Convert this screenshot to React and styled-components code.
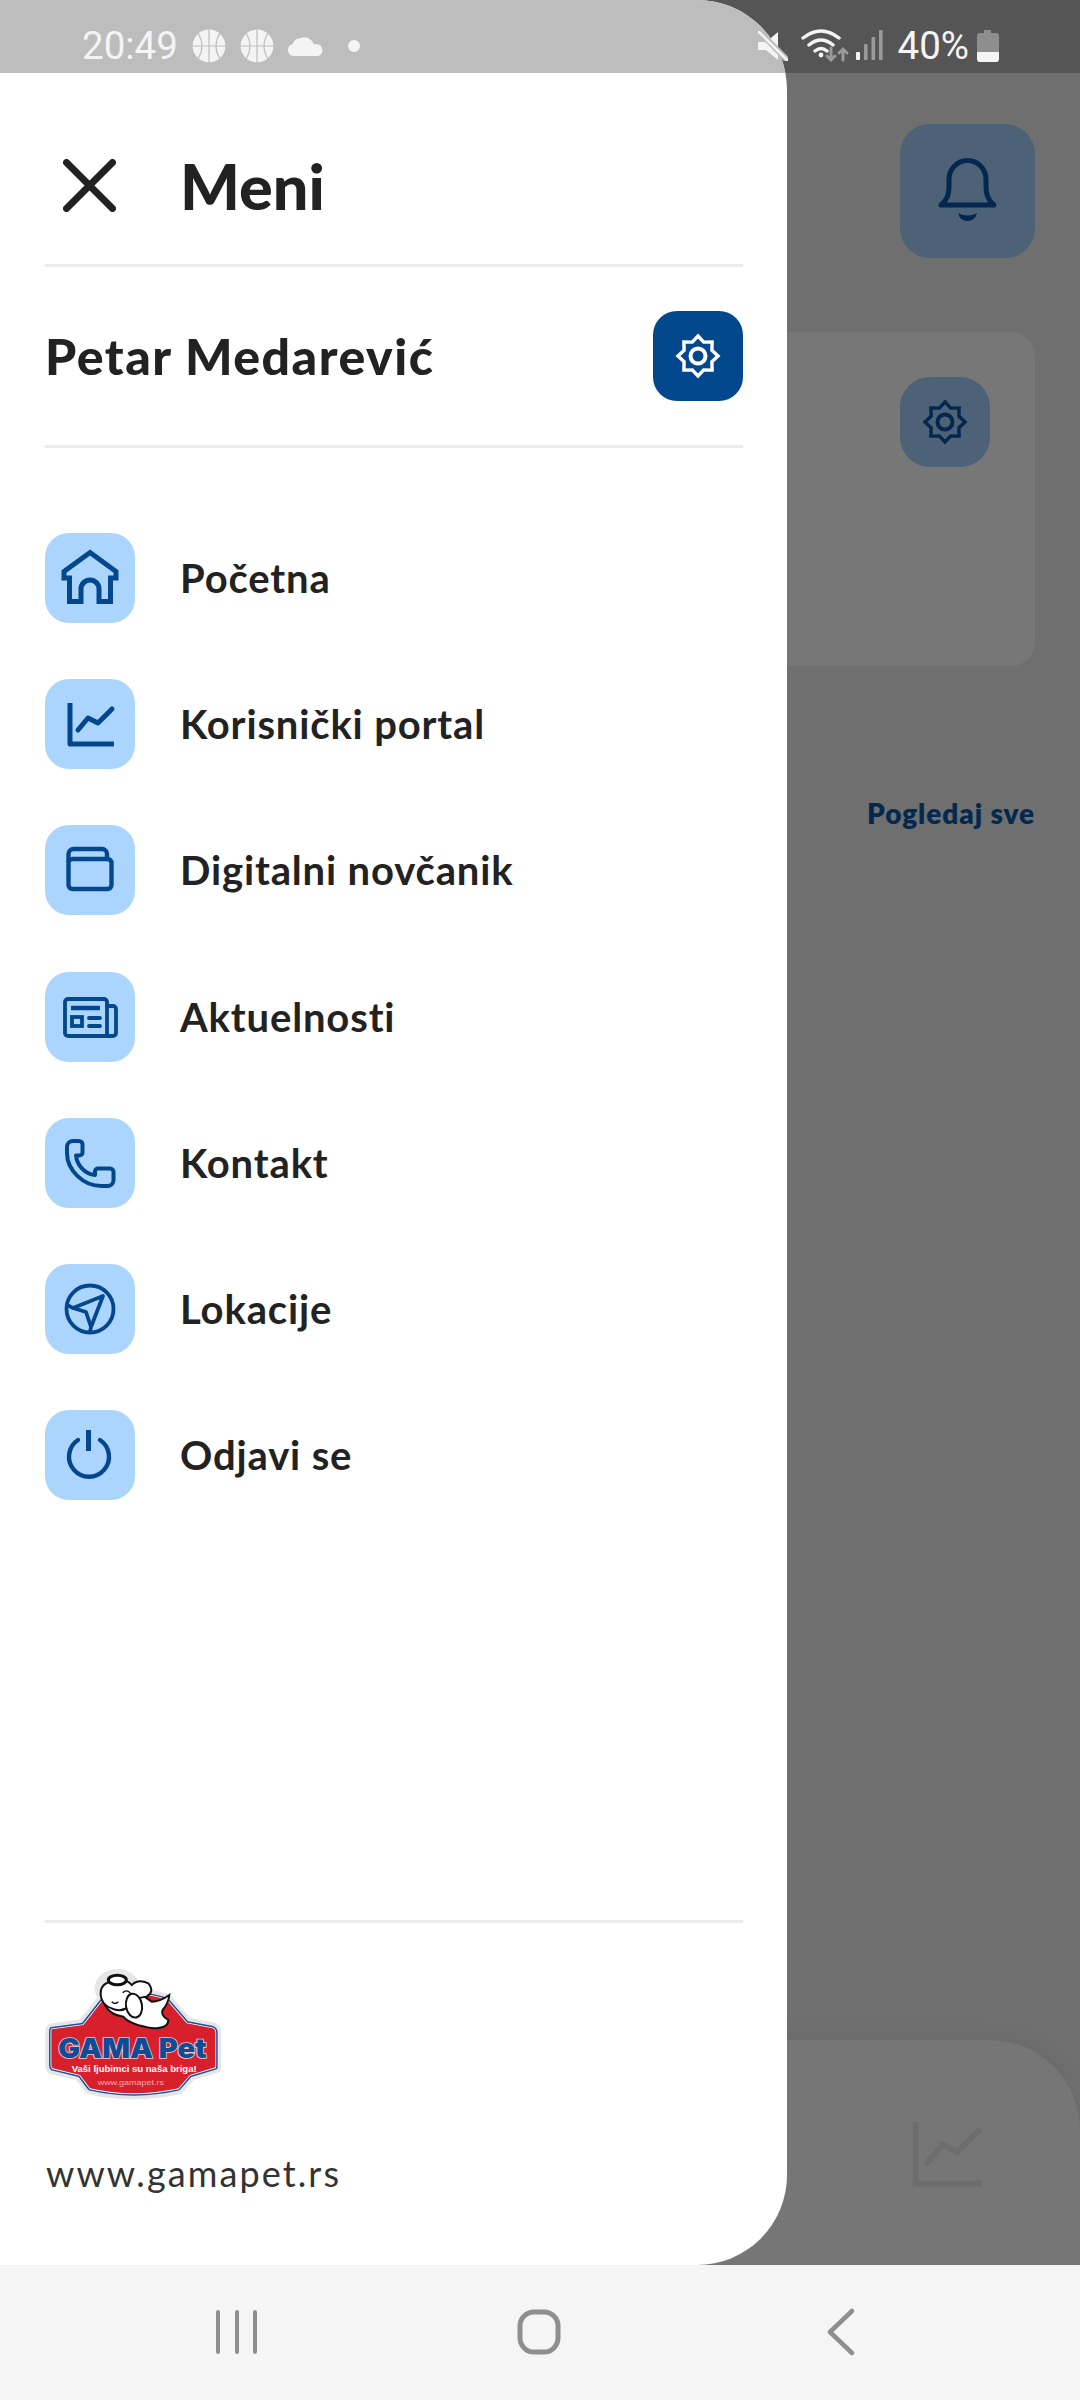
import React from 'react'
import styled, { createGlobalStyle } from 'styled-components'

const blue = '#03488c'

const GlobalStyle = createGlobalStyle`
html, body {
  margin: 0;
  padding: 0;
  background: #6f6f6f;
}
* { box-sizing: border-box; }
`

const Screen = styled.div`
position: relative;
width: 1080px;
height: 2400px;
display: flex;
flex-direction: column;
overflow: hidden;
font-family: Lato, "Noto Sans", sans-serif;
`

/* dimmed page behind the drawer */
const Backdrop = styled.div`
flex: 1;
display: flex;
flex-direction: column;
background: #6f6f6f;
`
const BackStatus = styled.div`
height: 73px;
background: #555555;
`
const BellRow = styled.div`
display: flex;
justify-content: flex-end;
padding: 51px 45px 0 0;
`
const DimButton = styled.div`
width: ${p => p.$w}px;
height: ${p => p.$h}px;
border-radius: 30px;
background: #4d6277;
display: flex;
align-items: center;
justify-content: center;
`
const BackCard = styled.div`
height: 334px;
margin: 74px 45px 0 0;
padding: 45px 45px 0 0;
display: flex;
justify-content: flex-end;
align-items: flex-start;
background: #777777;
border-radius: 24px;
`
const SeeAll = styled.div`
margin: 130px 45px 0 0;
text-align: right;
font-size: 28px;
line-height: 34px;
font-weight: 800;
letter-spacing: 0.9px;
color: #03294f;
`
const BackPanel = styled.div`
margin-top: auto;
height: 225px;
background: #767676;
border-top-right-radius: 90px;
box-shadow: 0 -6px 20px rgba(0, 0, 0, 0.04);
display: flex;
justify-content: flex-end;
padding: 46px 67px 0 0;
`

/* drawer */
const Drawer = styled.aside`
position: absolute;
left: 0;
top: 0;
bottom: 135px;
width: 787px;
display: flex;
flex-direction: column;
background: #ffffff;
border-radius: 0 90px 90px 0;
overflow: hidden;
`
const DrawerStatus = styled.div`
height: 73px;
flex: none;
background: #bdbdbd;
`
const DrawerHead = styled.div`
height: 191px;
flex: none;
display: flex;
align-items: center;
padding: 34px 0 0 63px;
gap: 64px;
`
const Title = styled.h1`
margin: 0;
font-size: 63px;
line-height: 76px;
font-weight: 900;
color: #222222;
`
const Divider = styled.div`
height: 3px;
flex: none;
margin: 0 44px 0 45px;
background: #ececec;
`
const UserRow = styled.div`
height: 178px;
flex: none;
display: flex;
align-items: center;
justify-content: space-between;
padding: 0 44px 0 45px;
`
const UserName = styled.div`
font-size: 50px;
line-height: 60px;
font-weight: 900;
letter-spacing: 1.5px;
color: #222222;
`
const IconBox = styled.div`
width: 90px;
height: 90px;
flex: none;
border-radius: 24px;
background: ${p => p.$dark ? blue : '#acd5fd'};
display: flex;
align-items: center;
justify-content: center;
`
const MenuList = styled.nav`
display: flex;
flex-direction: column;
gap: 56.2px;
padding: 85px 0 0 45px;
`
const MenuRow = styled.div`
display: flex;
align-items: center;
gap: 45px;
`
const MenuLabel = styled.span`
font-size: 40px;
line-height: 48px;
font-weight: 700;
letter-spacing: 0.85px;
color: #222222;
`
const DrawerFoot = styled.div`
margin-top: auto;
display: flex;
flex-direction: column;
`
const LogoWrap = styled.div`
padding: 37px 0 0 40px;
height: 228px;
`
const Website = styled.div`
padding: 0 0 70px 46px;
font-size: 36px;
line-height: 44px;
font-weight: 400;
letter-spacing: 2.1px;
color: #333333;
`

/* android bars */
const StatusBar = styled.div`
position: absolute;
left: 0;
top: 0;
width: 100%;
height: 73px;
display: flex;
align-items: center;
justify-content: space-between;
padding: 18px 81px 0 82px;
font-family: Roboto, sans-serif;
font-size: 38.5px;
color: #f4f4f4;
`
const StatusGroup = styled.div`
display: flex;
align-items: center;
gap: ${p => p.$gap || 0}px;
`
const StatusText = styled.span`
line-height: 55px;
margin: ${p => p.$m || 0};
`
const NavBar = styled.div`
height: 135px;
flex: none;
background: #f5f5f5;
display: flex;
align-items: center;
padding: 0 0 2px 216px;
`
const NavSlot = styled.div`
display: flex;
margin-right: ${p => p.$mr}px;
`

const star = (cx, cy, r1, r2) => {
  const pts = []
  for (let i = 0; i < 16; i++) {
    const r = i % 2 ? r2 : r1
    const a = (Math.PI / 8) * i - Math.PI / 2
    pts.push(`${(cx + r * Math.cos(a)).toFixed(1)},${(cy + r * Math.sin(a)).toFixed(1)}`)
  }
  return pts.join(' ')
}

const Stroke = ({ children, size = 90, box = 90, color = blue, sw = 4.5 }) => (
  <svg width={size} height={size} viewBox={`0 0 ${box} ${box}`} fill="none" stroke={color} strokeWidth={sw} strokeLinecap="round" strokeLinejoin="round">
    {children}
  </svg>
)

const Gear = ({ color }) => (
  <Stroke color={color} sw={3.4}>
    <polygon points={star(45, 45, 20, 15)} strokeLinejoin="miter" />
    <circle cx="45" cy="45" r="7.5" strokeWidth="4" />
  </Stroke>
)
const Chart = ({ color = blue, sw = 5, size = 90 }) => (
  <Stroke color={color} sw={sw} size={size}>
    <path d="M25 24V65H69" strokeLinecap="butt" />
    <path d="M33 51L43 39L53 44L67 30" />
  </Stroke>
)

const icons = {
  home: (
    <Stroke sw={5}>
      <path d="M45 19.5L71 38.5V45H65.5V68.5H54V56a9 9 0 0 0 -18 0V68.5H24.5V45H19V38.5Z" strokeLinecap="butt" strokeLinejoin="miter" />
    </Stroke>
  ),
  chart: <Chart />,
  wallet: (
    <Stroke sw={4.4}>
      <rect x="23.5" y="34" width="43" height="30" rx="4" />
      <path d="M23.5 36V29a5 5 0 0 1 5-5H57a5 5 0 0 1 5 5V34" />
    </Stroke>
  ),
  news: (
    <Stroke sw={3.8}>
      <path d="M20 30a3 3 0 0 1 3-3H59a3 3 0 0 1 3 3V64H23a3 3 0 0 1-3-3Z" />
      <path d="M62 34H68a3 3 0 0 1 3 3V61a3 3 0 0 1-3 3H62" />
      <path d="M26 36H55" strokeWidth="4.5" strokeLinecap="butt" />
      <rect x="27" y="45" width="10" height="9" strokeLinejoin="miter" />
      <path d="M44 46H55M44 54H55" />
    </Stroke>
  ),
  phone: (
    <Stroke sw={4}>
      <path d="M22 29a6 6 0 0 1 6-6h6a3.5 3.5 0 0 1 3.5 3.5v8a3 3 0 0 1-3 3h-3.5c1 10 9 18.5 19 19.5v-3.5a3 3 0 0 1 3-3h12a3.5 3.5 0 0 1 3.5 3.5v8a6 6 0 0 1-6 6h-6C38 68 22 52 22 35Z" />
    </Stroke>
  ),
  compass: (
    <Stroke sw={3.8}>
      <circle cx="45" cy="45" r="23.5" />
      <path d="M58 32L28 44L41 48L46 63ZM28 44L22 41M46 63L45 68" />
    </Stroke>
  ),
  power: (
    <Stroke sw={4.4}>
      <path d="M33 30A20 20 0 1 0 55 30" />
      <path d="M43.5 20V41" strokeWidth="5" strokeLinecap="butt" />
    </Stroke>
  ),
}

const menu = [
  ['home', 'Početna'],
  ['chart', 'Korisnički portal'],
  ['wallet', 'Digitalni novčanik'],
  ['news', 'Aktuelnosti'],
  ['phone', 'Kontakt'],
  ['compass', 'Lokacije'],
  ['power', 'Odjavi se'],
]

const badge = 'M35 208L130 195Q150 170 185 125Q280 85 380 120L440 190L518 205Q526 208 526 218V322L450 345L415 385Q280 415 150 385L120 345L38 325Q34 322 34 315V215Q34 209 35 208Z'
const logoFont = '"Liberation Sans", sans-serif'

const Logo = () => (
  <svg width="190" height="150" viewBox="0 0 570 450">
    <path d={badge} fill="#e6e6e6" stroke="#e6e6e6" strokeWidth="36" strokeLinejoin="round" />
    <ellipse cx="232" cy="85" rx="68" ry="58" fill="#e6e6e6" />
    <path d={badge} fill="#1a4e9e" stroke="#1a4e9e" strokeWidth="14" strokeLinejoin="round" />
    <path d={badge} fill="#fff" stroke="#fff" strokeWidth="5" strokeLinejoin="round" />
    <path d={badge} fill="#d8202c" />
    <path d="M195 135Q210 165 250 170Q270 195 340 205Q385 205 385 180Q360 165 368 150Q385 130 388 105Q360 125 335 125L300 100Z" fill="#fff" stroke="#111" strokeWidth="6" />
    <path d="M182 105Q180 70 215 65Q255 50 275 75Q295 55 325 70Q345 95 320 110L290 115Q255 165 215 145Q185 135 182 105Z" fill="#fff" stroke="#111" strokeWidth="6" />
    <ellipse cx="232" cy="60" rx="27" ry="14" fill="#fff" stroke="#111" strokeWidth="9" />
    <ellipse cx="282" cy="137" rx="24" ry="36" transform="rotate(-10 282 137)" fill="#fff" stroke="#111" strokeWidth="6" />
    <path d="M248 98Q260 86 272 100M215 125Q225 135 235 125" fill="none" stroke="#111" strokeWidth="4" />
    <text x="55" y="293" textLength="445" lengthAdjust="spacingAndGlyphs" fontFamily="Inter, sans-serif" fontWeight="900" fontSize="80" fill="#0d4c97" stroke="#f4c9cb" strokeWidth="5" paintOrder="stroke">GAMA Pet</text>
    <text x="95" y="335" textLength="375" lengthAdjust="spacingAndGlyphs" fontFamily={logoFont} fontWeight="700" fontSize="28" fill="#fff">Vaši ljubimci su naša briga!</text>
    <text x="173" y="375" textLength="199" lengthAdjust="spacingAndGlyphs" fontFamily={logoFont} fontSize="21" fill="#f2adad">www.gamapet.rs</text>
  </svg>
)

const Ball = () => (
  <svg width="34" height="34" viewBox="0 0 34 34" fill="#f4f4f4" stroke="#bdbdbd" strokeWidth="1.2">
    <circle cx="17" cy="17" r="16.4" stroke="none" />
    <path d="M0 17H34M17 0V34M6 4Q14 17 6 30M28 4Q20 17 28 30" fill="none" />
  </svg>
)

const App = () => {
  return (
    <Screen>
      <GlobalStyle />
      <Backdrop>
        <BackStatus />
        <BellRow>
          <DimButton $w={135} $h={134}>
            <Stroke size={135} box={135} color="#03274f" sw={5}>
              <path d="M41 81c6-5 8-10 8-20V55a18.5 18.5 0 0 1 37 0V61c0 10 2 15 8 20Z" />
              <path d="M58 89q9.5 5 19 0q-2 8-9.5 8q-7.5 0-9.5-8Z" fill="#03274f" stroke="none" />
            </Stroke>
          </DimButton>
        </BellRow>
        <BackCard>
          <DimButton $w={90} $h={90}><Gear color="#03274f" /></DimButton>
        </BackCard>
        <SeeAll>Pogledaj sve</SeeAll>
        <BackPanel><Chart color="#6d6d6d" sw={4} size={135} /></BackPanel>
      </Backdrop>
      <NavBar>
        <NavSlot $mr={256}>
          <svg width="44" height="46" viewBox="0 0 44 46" stroke="#8f8f8f" strokeWidth="4" strokeLinecap="round">
            <path d="M2 3V43M21 3V43M39 3V43" />
          </svg>
        </NavSlot>
        <NavSlot $mr={264}>
          <svg width="46" height="48" viewBox="0 0 46 48" fill="none" stroke="#8f8f8f" strokeWidth="5">
            <rect x="4" y="4" width="38" height="40" rx="14" />
          </svg>
        </NavSlot>
        <NavSlot $mr={0}>
          <svg width="30" height="48" viewBox="0 0 30 48" fill="none" stroke="#8f8f8f" strokeWidth="4.5" strokeLinecap="round" strokeLinejoin="round">
            <path d="M26 3L4 24L26 45" />
          </svg>
        </NavSlot>
      </NavBar>

      <Drawer>
        <DrawerStatus />
        <DrawerHead>
          <svg width="53" height="53" viewBox="0 0 53 53" fill="none" stroke="#222222" strokeWidth="7" strokeLinecap="round" style={{ flex: 'none' }}>
            <path d="M3.5 3.5L49.5 49.5M49.5 3.5L3.5 49.5" />
          </svg>
          <Title>Meni</Title>
        </DrawerHead>
        <Divider />
        <UserRow>
          <UserName>Petar Medarević</UserName>
          <IconBox $dark><Gear color="#ffffff" /></IconBox>
        </UserRow>
        <Divider />
        <MenuList>
          {menu.map(([icon, label]) => (
            <MenuRow key={label}>
              <IconBox>{icons[icon]}</IconBox>
              <MenuLabel>{label}</MenuLabel>
            </MenuRow>
          ))}
        </MenuList>
        <DrawerFoot>
          <Divider />
          <LogoWrap><Logo /></LogoWrap>
          <Website>www.gamapet.rs</Website>
        </DrawerFoot>
      </Drawer>

      <StatusBar>
        <StatusGroup $gap={14}>
          <StatusText>20:49</StatusText>
          <Ball />
          <Ball />
          <svg width="38" height="22" viewBox="0 0 38 22" fill="#f4f4f4" style={{ marginLeft: -1 }}>
            <path d="M7 21a6 6 0 0 1-1.5-11.8A9 9 0 0 1 14 3a10 10 0 0 1 13 6.5A6 6 0 0 1 31.5 21Z" />
          </svg>
          <svg width="12" height="12" viewBox="0 0 12 12" fill="#f4f4f4" style={{ marginLeft: 9 }}>
            <circle cx="6" cy="6" r="6" />
          </svg>
        </StatusGroup>
        <StatusGroup>
          <svg width="30" height="30" viewBox="0 0 30 30" fill="#f4f4f4" stroke="none">
            <path d="M0 11H8L20 1V29L8 19H0Z" />
            <path d="M2 1L29 29" stroke="#bdbdbd" strokeWidth="6" />
            <path d="M1 1L29 29" stroke="#f4f4f4" strokeWidth="2.6" strokeLinecap="round" />
          </svg>
          <svg width="52" height="36" viewBox="0 0 52 36" fill="none" stroke="#f4f4f4" strokeWidth="3.4" strokeLinecap="round" style={{ marginLeft: 13 }}>
            <path d="M2 10Q20 -4 38 10M8 17Q20 7 32 17M14 23Q20 18 26 23" />
            <circle cx="20" cy="27" r="2.4" fill="#f4f4f4" stroke="none" />
            <path d="M30 20V32M26 28L30 32L34 28M42 32V21M38 25L42 21L46 25" stroke="#9a9a9a" strokeWidth="3" />
          </svg>
          <svg width="30" height="32" viewBox="0 0 30 32" fill="#9a9a9a" style={{ marginLeft: 3 }}>
            <rect x="0" y="22" width="4" height="8" rx="1" fill="#f4f4f4" />
            <rect x="8" y="14" width="3.6" height="16" rx="1" />
            <rect x="15.5" y="7" width="3.6" height="23" rx="1" />
            <rect x="23" y="0" width="3.6" height="30" rx="1" />
          </svg>
          <StatusText $m="0 0 0 12px">40%</StatusText>
          <svg width="22" height="32" viewBox="0 0 22 32" style={{ marginLeft: 8 }}>
            <path d="M7 0H14V3H19a3 3 0 0 1 3 3V22H0V6a3 3 0 0 1 3-3H7Z" fill="#8e8e8e" />
            <path d="M0 22H22V29a3 3 0 0 1-3 3H3a3 3 0 0 1-3-3Z" fill="#f4f4f4" />
          </svg>
        </StatusGroup>
      </StatusBar>
    </Screen>
  )
}

export default App
